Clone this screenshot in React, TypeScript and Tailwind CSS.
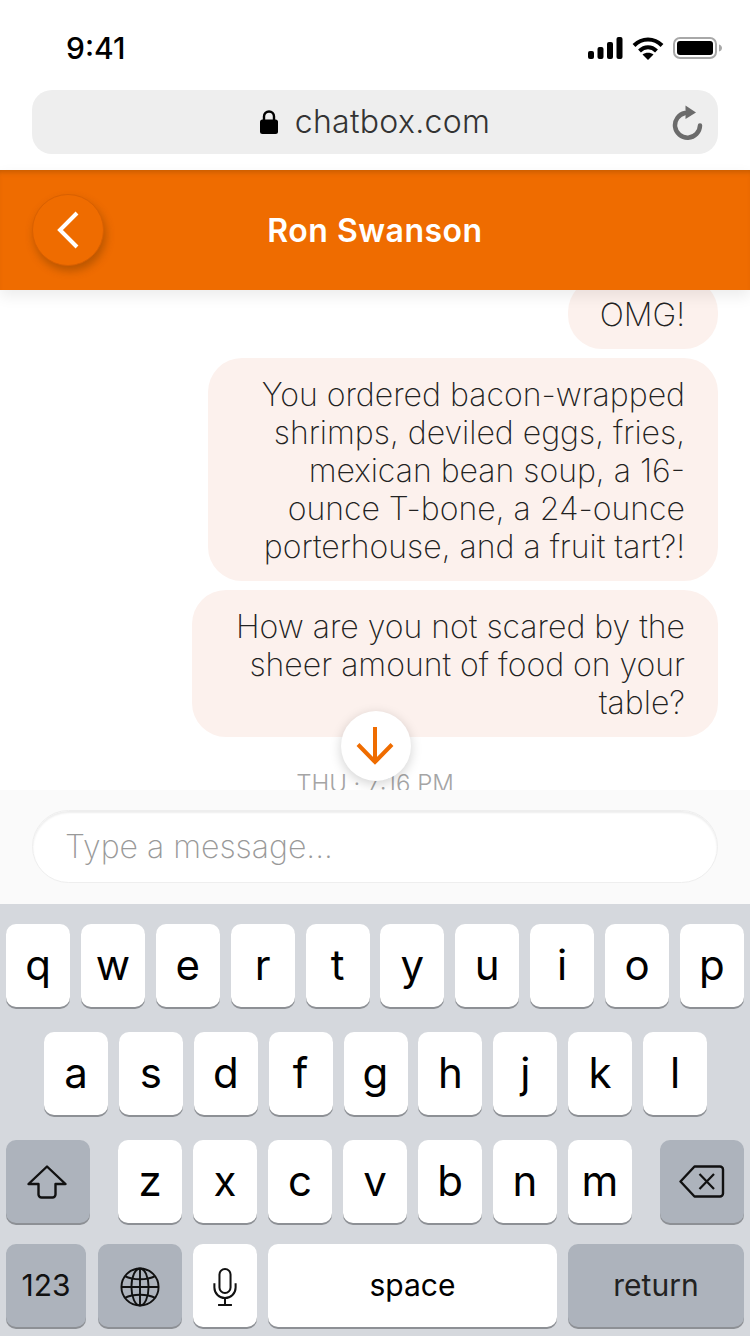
const rowOne = ['q', 'w', 'e', 'r', 't', 'y', 'u', 'i', 'o', 'p']
const rowTwo = ['a', 's', 'd', 'f', 'g', 'h', 'j', 'k', 'l']
const rowThree = ['z', 'x', 'c', 'v', 'b', 'n', 'm']

const messages = [
  { width: 'w-[150px]', lines: ['OMG!'] },
  {
    width: 'w-[510px]',
    lines: [
      'You ordered bacon-wrapped',
      'shrimps, deviled eggs, fries,',
      'mexican bean soup, a 16-',
      'ounce T-bone, a 24-ounce',
      'porterhouse, and a fruit tart?!',
    ],
  },
  {
    width: 'w-[526px]',
    lines: ['How are you not scared by the', 'sheer amount of food on your', 'table?'],
  },
]

function Key({ label, className = 'w-16 bg-white pb-[3px] text-[42px] text-black' }: { label: React.ReactNode; className?: string }) {
  return (
    <div className={`flex h-[83px] shrink-0 items-center justify-center rounded-[10px] shadow-[0_2px_0_#8d9095] ${className}`}>
      {label}
    </div>
  )
}

function StatusIcons() {
  return (
    <div className="flex items-center gap-[9px]">
      <svg width="35" height="22" viewBox="0 0 35 22" fill="#000">
        <rect x="0" y="14" width="6" height="8" rx="2" />
        <rect x="9.5" y="10" width="6" height="12" rx="2" />
        <rect x="19" y="5" width="6" height="17" rx="2" />
        <rect x="28.5" y="0" width="6" height="22" rx="2" />
      </svg>
      <svg width="32" height="23" viewBox="0 0 32 23" fill="none" stroke="#000" strokeWidth="4">
        <path d="M2 8.5C10 0.5 22 0.5 30 8.5" />
        <path d="M7.5 14C12.5 9 19.5 9 24.5 14" />
        <path d="M16 23l-5.5-5.5C13.5 15 18.5 15 21.5 17.5Z" fill="#000" stroke="none" />
      </svg>
      <svg width="49" height="22" viewBox="0 0 49 22">
        <rect x="1" y="1" width="42" height="20" rx="6" fill="none" stroke="#a8a8a8" strokeWidth="2" />
        <rect x="4" y="4" width="36" height="14" rx="3" fill="#000" />
        <path d="M46 7.5c2 .5 3 2 3 3.5s-1 3-3 3.5Z" fill="#a8a8a8" />
      </svg>
    </div>
  )
}

export default function App() {
  return (
    <div className="flex h-[1336px] w-[750px] flex-col overflow-hidden bg-white font-['Inter',sans-serif]">
      <div className="flex h-[90px] items-center justify-between pl-[66px] pr-[28px] pt-[6px]">
        <span className="text-[30px] font-medium text-black">9:41</span>
        <StatusIcons />
      </div>

      <div className="mx-8 grid h-16 grid-cols-[1fr_auto_1fr] items-center rounded-[20px] bg-[#eeeeee] px-[15px]">
        <span />
        <div className="flex items-center gap-[17px]">
          <svg width="18" height="24" viewBox="0 0 18 24" fill="none">
            <path d="M4 11V6.500a5 5 0 0 1 10 0V11" stroke="#000" strokeWidth="2.400" />
            <rect x="0" y="9.500" width="18" height="14.500" rx="2.500" fill="#000" />
          </svg>
          <span className="text-[32px] font-light leading-none tracking-[0.3px] text-[#333333]">chatbox.com</span>
        </div>
        <svg className="justify-self-end" width="32" height="36" viewBox="0 0 32 36" fill="none">
          <path d="M29 21.500A12.500 12.500 0 1 1 14 9" stroke="#6b6b6b" strokeWidth="4.500" strokeLinecap="round" />
          <path d="M14.500 1.500L25 8.500L14.500 15Z" fill="#6b6b6b" />
        </svg>
      </div>

      <div className="relative z-10 mt-4 grid h-[120px] grid-cols-[1fr_auto_1fr] items-center bg-[#ef6c00] px-8 shadow-[inset_0_5px_5px_-3px_rgba(120,60,0,0.35),0_6px_14px_rgba(0,0,0,0.08)]">
        <button className="flex h-[72px] w-[72px] items-center justify-center rounded-full border border-[#d96000] bg-[#ef6c00] shadow-[2px_5px_8px_rgba(120,60,0,0.45)]">
          <svg width="26" height="38" viewBox="0 0 26 38" fill="none" stroke="#ffffff" strokeWidth="4">
            <path d="M22 2L5 19L22 36" />
          </svg>
        </button>
        <h1 className="pt-[2px] text-[32px] font-semibold tracking-[0.5px] text-white">Ron Swanson</h1>
        <span />
      </div>

      <div className="relative h-[500px] overflow-hidden bg-white">
        <div className="-mt-[12px] flex flex-col items-end gap-[9px] pr-8">
          {messages.map((message) => (
            <div
              key={message.lines[0]}
              className={`${message.width} whitespace-nowrap rounded-[34px] bg-[#fcf1ed] pb-[15px] pl-4 pr-[33px] pt-[18px] text-right text-[32px] font-extralight leading-[38px] text-[#222222]`}
            >
              {message.lines.map((line) => (
                <div key={line}>{line}</div>
              ))}
            </div>
          ))}
          <div className="mt-[20px] w-full pl-8 text-center text-[24px] font-light text-[#a5a5a5]">THU · 7:16 PM</div>
        </div>
        <button className="absolute left-[341px] top-[421px] flex h-[70px] w-[70px] items-center justify-center rounded-full bg-white pr-[2px] shadow-[0_3px_12px_rgba(0,0,0,0.18)]">
          <svg width="38" height="38" viewBox="0 0 38 38" fill="none" stroke="#ef6c00" strokeWidth="4">
            <path d="M19 0V35" />
            <path d="M2 17.500L19 35L36 17.500" />
          </svg>
        </button>
      </div>

      <div className="flex h-[114px] items-start bg-[#fafafa] px-8 pt-5">
        <div className="flex h-[73px] w-full items-center rounded-full border border-[#eeeeee] bg-white pl-8 text-[32px] font-extralight text-[#999999] shadow-[inset_0_2px_2px_rgba(0,0,0,0.07)]">
          Type a message...
        </div>
      </div>

      <div className="flex flex-1 flex-col bg-[#d5d8dd] px-1.5 pt-5">
        <div className="flex justify-between">
          {rowOne.map((letter) => (
            <Key key={letter} label={letter} />
          ))}
        </div>

        <div className="mt-[25px] flex justify-between pl-[38px] pr-[37px]">
          {rowTwo.map((letter) => (
            <Key key={letter} label={letter} />
          ))}
        </div>

        <div className="mt-[25px] flex justify-between">
          <Key
            className="w-[84px] bg-[#adb3bc] pr-[3px]"
            label={
              <svg width="40" height="34" viewBox="0 0 40 34" fill="none" stroke="#111111" strokeWidth="2.400" strokeLinejoin="round">
                <path d="M20 1.500L38.500 19H28.500V29.500a3 3 0 0 1-3 3H14.500a3 3 0 0 1-3-3V19H1.500Z" />
              </svg>
            }
          />
          <div className="flex w-[514px] justify-between">
            {rowThree.map((letter) => (
              <Key key={letter} label={letter} />
            ))}
          </div>
          <Key
            className="w-[84px] bg-[#adb3bc]"
            label={
              <svg width="46" height="33" viewBox="0 0 46 33" fill="none" stroke="#111111" strokeWidth="2.400" strokeLinejoin="round">
                <path d="M15.500 1.500H41a3 3 0 0 1 3 3V28.500a3 3 0 0 1-3 3H15.500L1.500 16.500Z" />
                <path d="M20.500 9L35 24M35 9L20.500 24" strokeWidth="2.200" />
              </svg>
            }
          />
        </div>

        <div className="mt-[21px] flex">
          <Key className="w-20 bg-[#adb3bc] text-[30px] text-[#111111]" label="123" />
          <Key
            className="ml-3 w-[84px] bg-[#adb3bc] pt-[3px]"
            label={
              <svg width="40" height="40" viewBox="0 0 42 42" fill="none" stroke="#111111" strokeWidth="2">
                <circle cx="21" cy="21" r="19.500" />
                <ellipse cx="21" cy="21" rx="9" ry="19.500" />
                <path d="M21 1.500V40.500M1.500 21H40.500" />
                <path d="M5 9.500C14 14 28 14 37 9.500M5 32.500C14 28 28 28 37 32.500" />
              </svg>
            }
          />
          <Key
            className="ml-[11px] w-16 bg-white pt-[3px]"
            label={
              <svg width="24" height="40" viewBox="0 0 26 42" fill="none" stroke="#111111" strokeWidth="2.200">
                <rect x="7" y="1.500" width="12" height="26" rx="6" />
                <path d="M1.500 17V21.500a11.500 11.500 0 0 0 23 0V17" />
                <path d="M13 33V40.500M5.500 40.500H20.500" />
              </svg>
            }
          />
          <Key className="ml-[11px] w-[289px] bg-white text-[30px] text-black" label="space" />
          <Key className="ml-[11px] w-44 bg-[#adb3bc] text-[30px] text-[#222222]" label="return" />
        </div>
      </div>
    </div>
  )
}
